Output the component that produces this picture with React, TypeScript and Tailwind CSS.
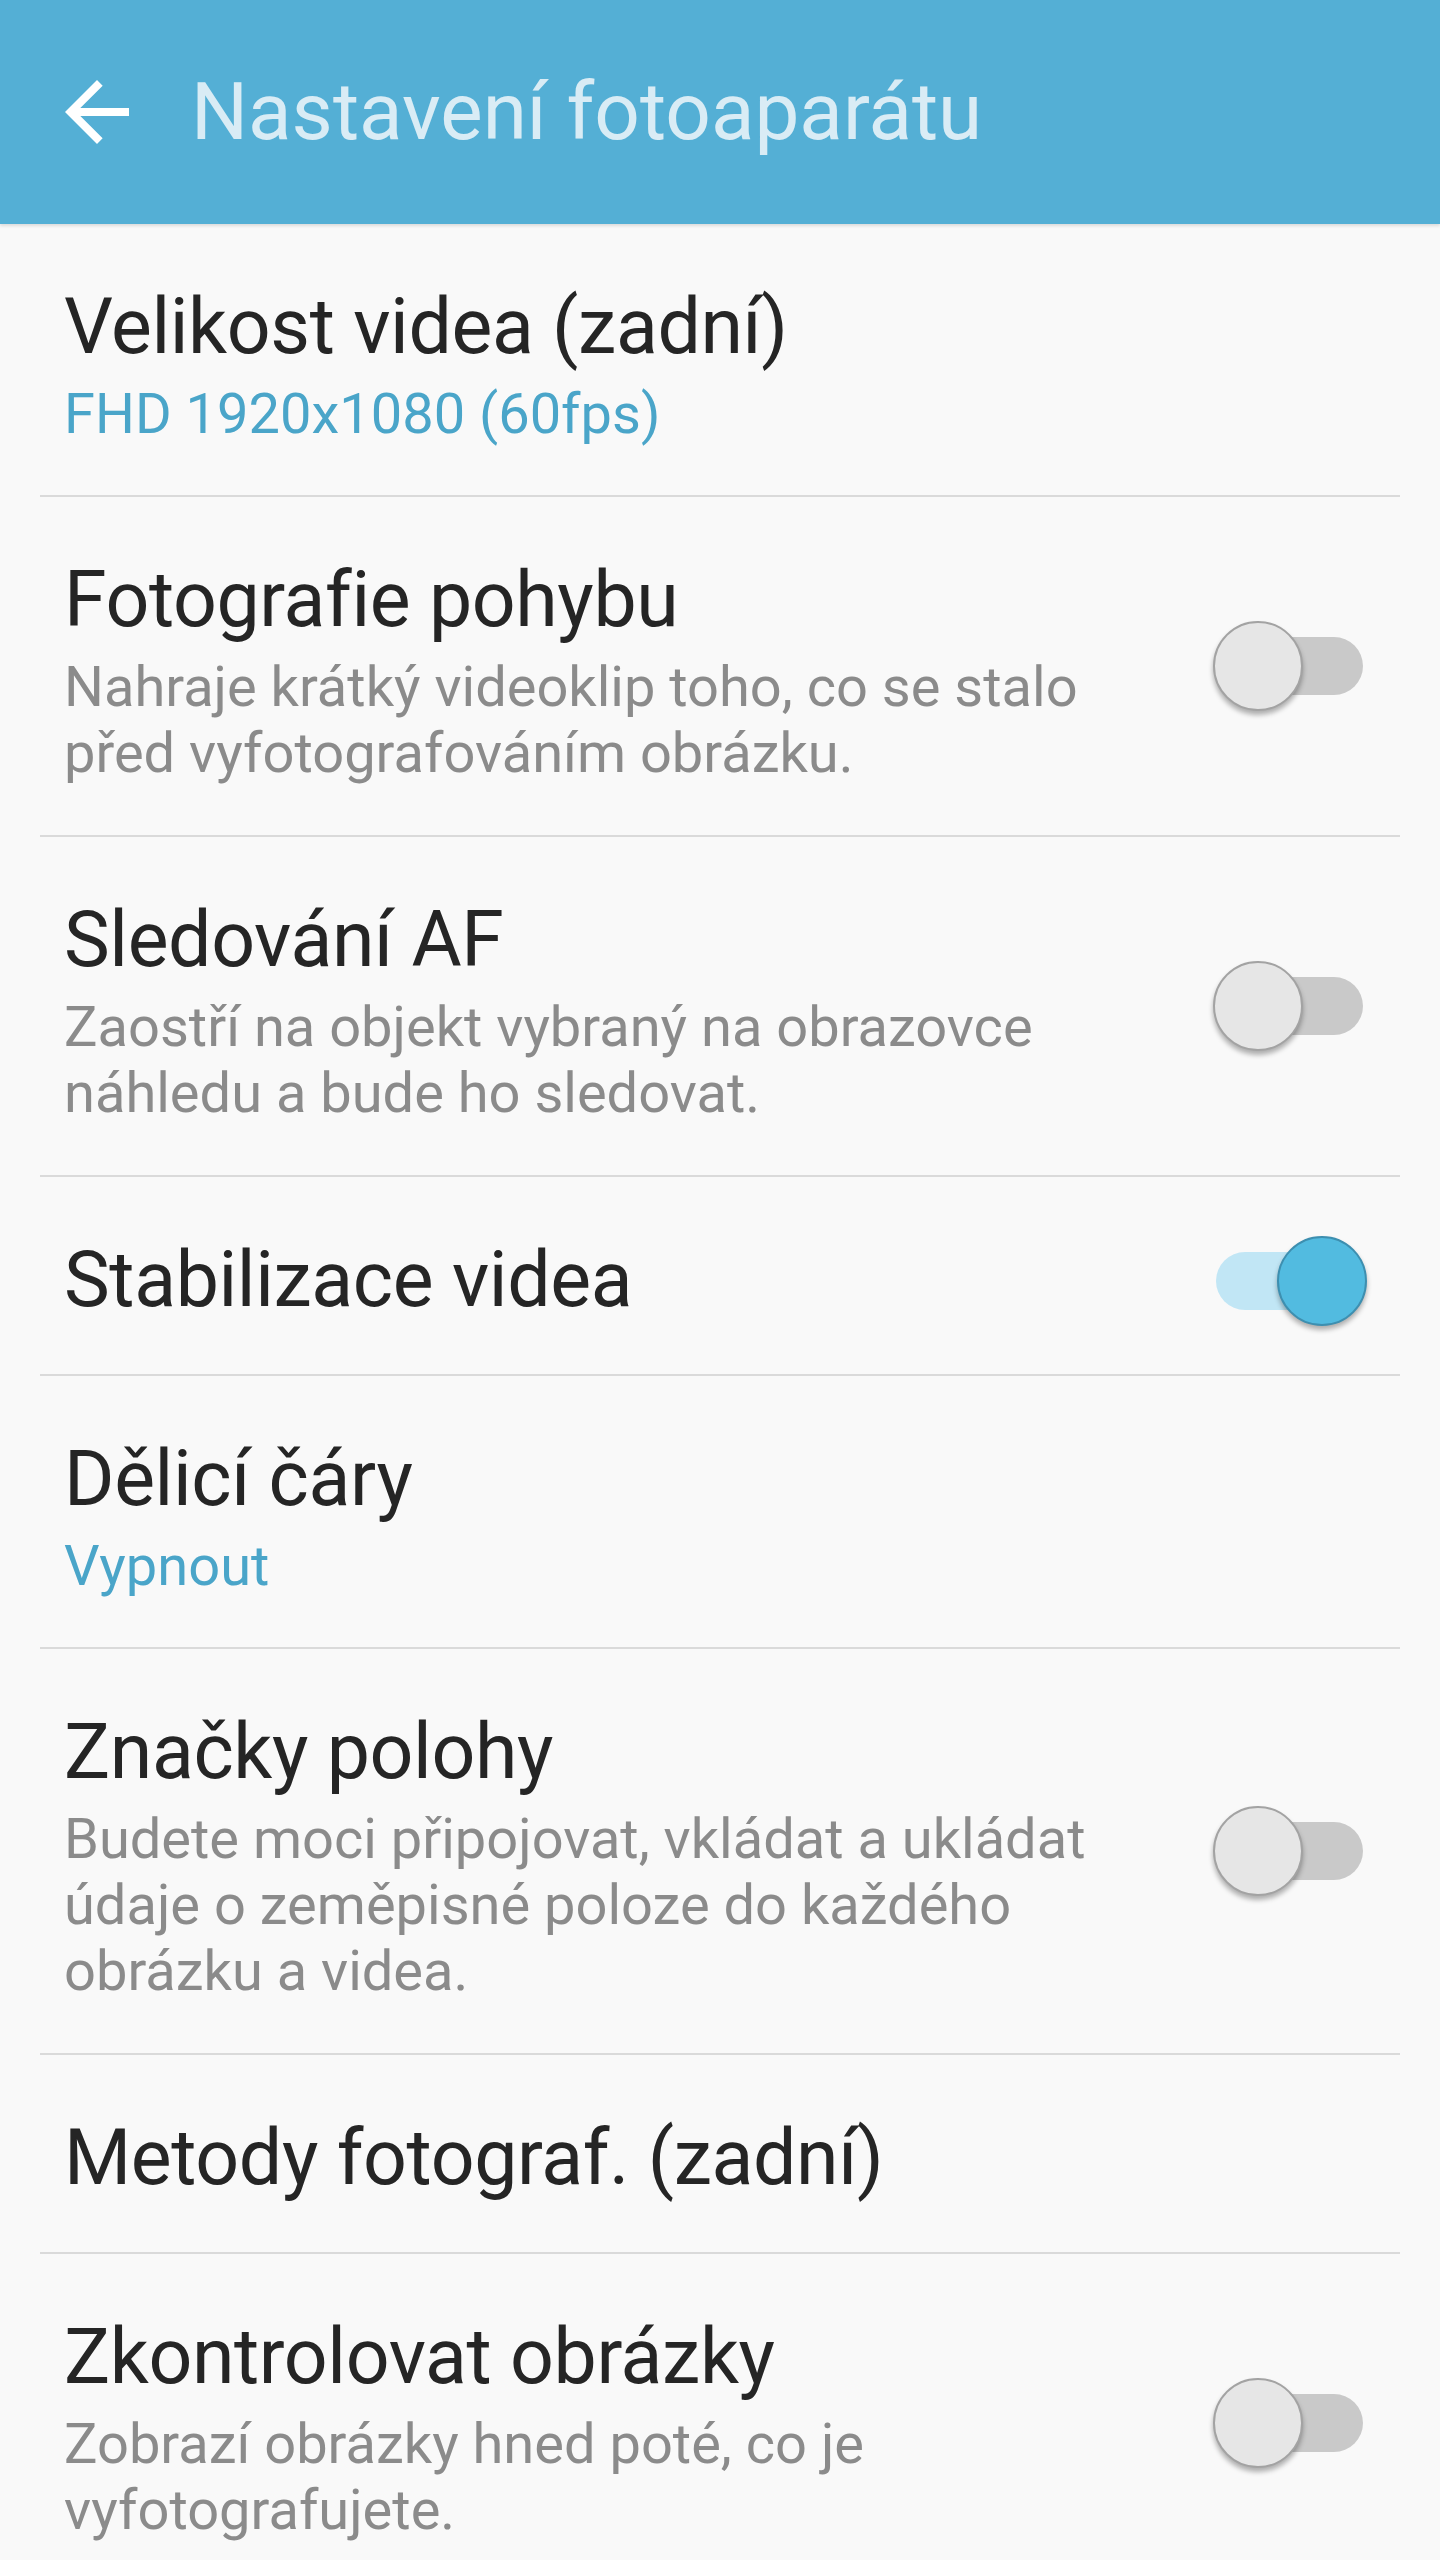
import React from 'react';

type Setting = {
  id: string;
  title: string;
  value?: string;
  desc?: string[];
  toggle?: boolean;
};

const settings: Setting[] = [
  { id: 'video-size', title: 'Velikost videa (zadní)', value: 'FHD 1920x1080 (60fps)' },
  {
    id: 'motion-photo',
    title: 'Fotografie pohybu',
    desc: ['Nahraje krátký videoklip toho, co se stalo', 'před vyfotografováním obrázku.'],
    toggle: false,
  },
  {
    id: 'tracking-af',
    title: 'Sledování AF',
    desc: ['Zaostří na objekt vybraný na obrazovce', 'náhledu a bude ho sledovat.'],
    toggle: false,
  },
  { id: 'stabilization', title: 'Stabilizace videa', toggle: true },
  { id: 'grid', title: 'Dělicí čáry', value: 'Vypnout' },
  {
    id: 'location',
    title: 'Značky polohy',
    desc: [
      'Budete moci připojovat, vkládat a ukládat',
      'údaje o zeměpisné poloze do každého',
      'obrázku a videa.',
    ],
    toggle: false,
  },
  { id: 'shooting-methods', title: 'Metody fotograf. (zadní)' },
  {
    id: 'review',
    title: 'Zkontrolovat obrázky',
    desc: ['Zobrazí obrázky hned poté, co je', 'vyfotografujete.'],
    toggle: false,
  },
];

function Toggle({ on }: { on: boolean }) {
  return (
    <div className="relative w-[154px] h-[92px] shrink-0 flex items-center">
      <div
        className={
          on
            ? 'absolute left-[3px] right-[4px] h-[58px] rounded-full bg-[#c1e6f5]'
            : 'absolute left-[3px] right-[4px] h-[58px] rounded-full bg-[#c9c9c9]'
        }
      />
      <div
        className={
          on
            ? 'absolute right-0 w-[90px] h-[90px] rounded-full bg-[#52bbe0] border-2 border-[#3d8fb0] shadow-[0_4px_5px_rgba(0,0,0,0.3)]'
            : 'absolute left-0 w-[90px] h-[90px] rounded-full bg-[#e6e6e6] border-2 border-[#a3a3a3] shadow-[0_4px_5px_rgba(0,0,0,0.3)]'
        }
      />
    </div>
  );
}

function SettingRow({ item }: { item: Setting }) {
  // bottom padding differs: value rows, description rows and plain rows
  let pad = 'pb-[38px]';
  if (item.value) pad = 'pb-[50px]';
  else if (item.desc) pad = 'pb-[49px]';

  return (
    <div className="mx-10 border-b-2 border-[#dadada]">
      <div className={`flex items-center pl-6 pr-[33px] pt-12 ${pad}`}>
        <div className="flex-1 min-w-0">
          <div className="text-[77px] leading-[111px] text-[#252525] tracking-[-0.005em] whitespace-nowrap">
            {item.title}
          </div>
          {item.value && <div className="text-[56px] leading-[62px] text-[#4aa5c9]">{item.value}</div>}
          {item.desc && (
            <div className="text-[56px] leading-[66px] text-[#8b8b8b] -mt-[2px]">
              {item.desc.map(line => (
                <div key={line} className="whitespace-nowrap">
                  {line}
                </div>
              ))}
            </div>
          )}
        </div>
        {item.toggle !== undefined && <Toggle on={item.toggle} />}
      </div>
    </div>
  );
}

export default function App() {
  return (
    <div className="min-h-[2560px] bg-[#f9f9f9] font-['Roboto',sans-serif]">
      <header className="h-[224px] bg-[#54afd5] flex items-center pl-[49px] shadow-[0_2px_3px_rgba(0,0,0,0.12)]">
        <svg viewBox="0 0 24 24" className="w-24 h-24 shrink-0" fill="#ffffff">
          <path d="M20 11H7.83l5.59-5.59L12 4l-8 8 8 8 1.41-1.41L7.83 13H20v-2z" />
        </svg>
        <h1 className="ml-[46px] text-[80px] leading-none text-[#d9ecf5] whitespace-nowrap">
          Nastavení fotoaparátu
        </h1>
      </header>
      <main>
        {settings.map(item => (
          <SettingRow key={item.id} item={item} />
        ))}
      </main>
    </div>
  );
}
